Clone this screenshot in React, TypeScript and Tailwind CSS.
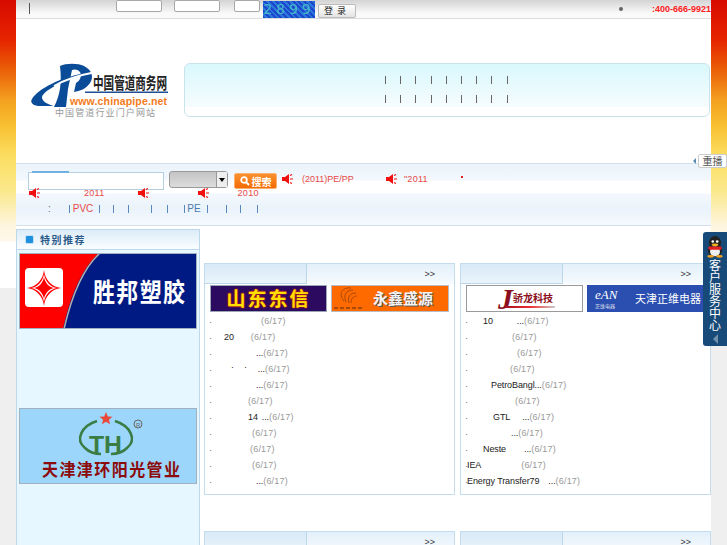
const CJK = "font-['Noto_Sans_CJK_SC',sans-serif]";

type Seg = { c?: string; t: string; d?: boolean };

function Speaker({ className = "" }: { className?: string }) {
  return (
    <svg width="11" height="10" viewBox="0 0 11 10" className={`shrink-0 ${className}`}>
      <path d="M0 3h3L7 0v10L3 7H0z" fill="#f01010" />
      <path d="M8 1.500l2-1M8 5h3M8 8.500l2 1" stroke="#f01010" strokeWidth="1.200" fill="none" />
    </svg>
  );
}

function Pipe({ c }: { c: string }) {
  return <span className={`w-px h-[8px] bg-[#5a86c0] shrink-0 ${c}`} />;
}

function BannerPipes() {
  return (
    <div className="flex gap-[14.2px]">
      {[0, 1, 2, 3, 4, 5, 6, 7, 8].map((i) => (
        <span key={i} className="w-px h-[8px] bg-[#666]" />
      ))}
    </div>
  );
}

function Logo() {
  return (
    <svg width="142" height="60" viewBox="0 0 142 60" className="block">
      <path d="M2 36C8 26 30 14 60 9l.500 1C40 15 14 26 12 34c0 4 4 7 12 9H8C2 42 0 39 2 36Z" fill="#0b4c98" />
      <path d="M30 3C36 0 48 0 54 3c8 4 10 11 6 17-4 6-10 8-16 9l2-9c4-2 6-7 4-11-2-3-6-3-8-2L38 26l-2 18H24C30 32 32 20 30 3Z" fill="#0b4c98" />
      <path d="M24 23C36 16 50 12 66 9" stroke="#fff" strokeWidth="1.800" fill="none" />
      <rect x="55" y="28.500" width="83" height="1.500" fill="#1f4f90" />
      <text transform="translate(63,26) scale(1,1.550)" fontSize="10.600" fontWeight="700" fill="#222" textLength="74" className={CJK}>中国管道商务网</text>
      <text x="40" y="42" fontSize="10.500" fontWeight="700" fill="#f47a20" textLength="97" className="font-['Liberation_Sans',sans-serif]">www.chinapipe.net</text>
      <text x="25" y="53" fontSize="9" fill="#999" textLength="100" className={CJK}>中国管道行业门户网站</text>
    </svg>
  );
}

function AdShengbang() {
  return (
    <svg width="178" height="76" viewBox="0 0 178 76" className="block">
      <rect width="178" height="76" fill="#001a84" />
      <path d="M0 0H80C60 18 50 50 44 76H0Z" fill="#ff0000" />
      <path d="M81 0C61 18 51 50 45 76" stroke="#b0b0b0" strokeWidth="1.500" fill="none" />
      <rect x="6" y="15" width="38" height="39" rx="4" fill="#fff" />
      <path d="M25 17c1 10 8 17 17 18-9 1-16 8-17 18-1-10-8-17-17-18 9-1 16-8 17-18Z" fill="#ff0000" />
      <path d="M25 21c1 7 6 13 13 14-7 1-12 7-13 14-1-7-6-13-13-14 7-1 12-7 13-14Z" fill="#fff" />
      <path d="M25 24c1 6 5 10 10 11-5 1-9 5-10 11-1-6-5-10-10-11 5-1 9-5 10-11Z" fill="#ff0000" />
      <text transform="translate(74,49) scale(1,1.200)" fontSize="22" fontWeight="700" fill="#fff" textLength="92" className={CJK}>胜邦塑胶</text>
      <rect x=".500" y=".500" width="177" height="75" fill="none" stroke="#9fb0c4" />
    </svg>
  );
}

function AdTianjin() {
  return (
    <svg width="178" height="76" viewBox="0 0 178 76" className="block">
      <rect width="178" height="76" fill="#9dd6fb" />
      <path d="M87 4l1.800 4.400 4.700.3-3.600 3 1.200 4.600-4.100-2.500-4.100 2.500 1.200-4.600-3.600-3 4.700-.3Z" fill="#e8473a" />
      <path d="M78 13C62 18 56 32 66 40c4 4 10 6 16 6" stroke="#3a7d44" strokeWidth="2.500" fill="none" />
      <path d="M96 13c16 5 22 19 12 27-4 4-10 6-16 6" stroke="#3a7d44" strokeWidth="2.500" fill="none" />
      <text x="70" y="45" fontSize="24" fontWeight="700" fill="#3a7d44" textLength="33" lengthAdjust="spacingAndGlyphs" className="font-['Liberation_Sans',sans-serif]">TH</text>
      <circle cx="119" cy="16" r="4" fill="none" stroke="#666" />
      <text x="117" y="18.500" fontSize="6" fill="#666">R</text>
      <text transform="translate(23,68) scale(1,1.100)" fontSize="16" fontWeight="700" fill="#8c0c0c" textLength="138" className={CJK}>天津津环阳光管业</text>
      <rect x=".500" y=".500" width="177" height="75" fill="none" stroke="#a0b0bc" />
    </svg>
  );
}

function AdShandong() {
  return (
    <div className={`w-[117px] h-[27px] bg-[#2c0a60] border border-[#9aa7b5] flex items-center justify-center text-[#ffe000] text-[19px] font-bold tracking-[2px] [text-shadow:0_0_2px_#f02000,0_0_1px_#f02000] ${CJK}`}>
      山东东信
    </div>
  );
}

function AdYongxin() {
  return (
    <div className={`w-[118px] h-[27px] bg-[#ff6a00] border border-[#b9bec4] flex items-center ${CJK}`}>
      <svg width="38" height="25" viewBox="0 0 38 25" className="shrink-0">
        <path d="M12 15C6 8 10 1 19 2M14 16C11 9 14 4 21 4M17 17C15 11 18 7 24 7M19 17C19 13 21 10 25 10" stroke="#a8480a" strokeWidth="1" fill="none" />
        <path d="M2 22h28" stroke="#a8480a" strokeWidth="2" strokeDasharray="4 2" />
      </svg>
      <span className="ml-[3px] text-[#f4f4f4] text-[15px] font-bold [text-shadow:1px_1px_0_#555] whitespace-nowrap">永鑫盛源</span>
    </div>
  );
}

function AdJiaolong() {
  return (
    <div className={`relative w-[117px] h-[27px] bg-white border border-[#9a9a9a] flex items-center pl-[31px] ${CJK}`}>
      <span className="text-[#8a1020] text-[30px] leading-[25px] italic font-bold font-['Liberation_Serif',serif] w-[15px]">J</span>
      <span className="text-[#8a1020] text-[10px] font-bold -mt-[3px] whitespace-nowrap">骄龙科技</span>
      <span className="absolute left-[38px] top-[20px] w-[50px] h-[2px] bg-[linear-gradient(90deg,#a01020,#f03030,#ccc)]" />
    </div>
  );
}

function AdZhengwei() {
  return (
    <div className={`w-[120px] h-[27px] bg-[#2b4fb0] flex items-center pl-[8px] text-white ${CJK}`}>
      <span className="w-[40px] flex flex-col leading-none gap-[2px]">
        <span className="text-[13px] italic font-['Liberation_Serif',serif] leading-[12px]">eAN</span>
        <span className="text-[5px] leading-[6px] opacity-80">正维电器</span>
      </span>
      <span className="text-[11px] whitespace-nowrap">天津正维电器</span>
    </div>
  );
}

const raised = "-translate-y-[2px]";

const leftRows: Seg[][] = [
  [{ c: "ml-[50px]", t: "(6/17)", d: true }],
  [{ c: "ml-[13px]", t: "20" }, { c: "ml-[17px]", t: "(6/17)", d: true }],
  [{ c: "ml-[45px]", t: "..." }, { t: "(6/17)", d: true }],
  [{ c: `ml-[20px] ${raised}`, t: "·" }, { c: `ml-[10px] ${raised}`, t: "·" }, { c: "ml-[11px]", t: "..." }, { t: "(6/17)", d: true }],
  [{ c: "ml-[45px]", t: "..." }, { t: "(6/17)", d: true }],
  [{ c: "ml-[37px]", t: "(6/17)", d: true }],
  [{ c: "ml-[37px]", t: "14" }, { c: "ml-[4px]", t: "..." }, { t: "(6/17)", d: true }],
  [{ c: "ml-[41px]", t: "(6/17)", d: true }],
  [{ c: "ml-[39px]", t: "(6/17)", d: true }],
  [{ c: "ml-[41px]", t: "(6/17)", d: true }],
  [{ c: "ml-[45px]", t: "..." }, { t: "(6/17)", d: true }],
];

const rightRows: Seg[][] = [
  [{ c: "ml-[16px]", t: "10" }, { c: "ml-[24px]", t: "..." }, { t: "(6/17)", d: true }],
  [{ c: "ml-[45px]", t: "(6/17)", d: true }],
  [{ c: "ml-[50px]", t: "(6/17)", d: true }],
  [{ c: "ml-[43px]", t: "(6/17)", d: true }],
  [{ c: "ml-[24px]", t: "PetroBangl..." }, { t: "(6/17)", d: true }],
  [{ c: "ml-[48px]", t: "(6/17)", d: true }],
  [{ c: "ml-[26px]", t: "GTL" }, { c: "ml-[12px]", t: "..." }, { t: "(6/17)", d: true }],
  [{ c: "ml-[44px]", t: "..." }, { t: "(6/17)", d: true }],
  [{ c: "ml-[16px]", t: "Neste" }, { c: "ml-[18px]", t: "..." }, { t: "(6/17)", d: true }],
  [{ t: "IEA" }, { c: "ml-[40px]", t: "(6/17)", d: true }],
  [{ t: "Energy Transfer79" }, { c: "ml-[9px]", t: "..." }, { t: "(6/17)", d: true }],
];

function Rows({ rows }: { rows: Seg[][] }) {
  return (
    <div className="pl-[4px] pt-[2px]">
      {rows.map((r, i) => (
        <div key={i} className="h-[16px] flex items-center text-[9px] text-[#333] whitespace-nowrap">
          <span className="w-[2px] text-[#666] leading-none">·</span>
          {r.map((s, j) => (
            <span key={j} className={`${s.c ?? ""} ${s.d ? "text-[#999] tracking-[0.2px]" : "text-[#222] tracking-[-0.1px]"}`}>
              {s.t}
            </span>
          ))}
        </div>
      ))}
    </div>
  );
}

function PanelHead() {
  return (
    <div className="h-[20px] flex bg-[linear-gradient(#e3f0fa,#f6fbff)]">
      <div className="w-[102px] h-[20px] bg-[linear-gradient(#d8e9f7,#eaf4fc)] border-r border-b border-[#bdd7ea]" />
      <div className="flex-1 flex justify-end items-center pr-[19px] pt-[2px] text-[9px] text-[#333]">&gt;&gt;</div>
    </div>
  );
}

function Panel({ left, right, rows }: { left: React.ReactNode; right: React.ReactNode; rows: Seg[][] }) {
  return (
    <div className="w-[251px] h-[232px] border border-[#c3dcee] bg-white overflow-hidden">
      <PanelHead />
      <div className="flex gap-[4px] pl-[5px] pt-[1px]">
        {left}
        {right}
      </div>
      <Rows rows={rows} />
    </div>
  );
}

export default function App() {
  return (
    <div className="relative w-[727px] h-[545px] overflow-hidden flex font-['Liberation_Sans',sans-serif] bg-[#efefef]">
      <div className="w-[16px] h-[288px] shrink-0 bg-[linear-gradient(#d80a00_0px,#e52500_40px,#ea6008_70px,#f4a020_100px,#f8c030_125px,#fbdd60_155px,#fbe88a_190px,#fdf5dc_225px,#fff8ea_241px,#fff_242px)]" />

      <div className="w-[695px] h-[545px] shrink-0 bg-white">
        {/* top bar */}
        <div className="h-[19px] border-b border-[#dcdcdc] bg-[linear-gradient(#d4d4d4,#fafafa_75%)] flex items-start relative">
          <span className="ml-[13px] mt-[3px] w-px h-[11px] bg-[#555]" />
          <span className="ml-[86px] w-[46px] h-[12px] bg-white border border-[#a8a8a8] rounded-[2px]" />
          <span className="ml-[12px] w-[46px] h-[12px] bg-white border border-[#a8a8a8] rounded-[2px]" />
          <span className="ml-[14px] w-[26px] h-[12px] bg-white border border-[#a8a8a8] rounded-[2px]" />
          <span className="ml-[3px] mt-[1px] w-[52px] h-[17px] bg-[repeating-linear-gradient(45deg,#1c48d0_0px,#1c48d0_2px,#2a78d8_2px,#2a78d8_4px)] text-[#48b8c8] text-[14px] leading-[17px] text-center tracking-[4px] font-['DejaVu_Sans',sans-serif] overflow-hidden">
            2899
          </span>
          <span className={`ml-[3px] mt-[4px] w-[38px] h-[14px] bg-[linear-gradient(#fff,#e4e4e4)] border border-[#bbb] rounded-[2px] text-[9px] leading-[12px] text-center text-[#222] tracking-[4px] ${CJK}`}>
            登录
          </span>
          <span className="ml-[263px] mt-[7px] w-[4px] h-[4px] rounded-full bg-[#666]" />
          <span className="ml-[29px] mt-[3px] text-[9px] font-bold text-[#ff2020] whitespace-nowrap leading-[12px]">:400-666-9921</span>
        </div>

        {/* logo + banner */}
        <div className="h-[144px] flex items-start pt-[44px]">
          <div className="ml-[14px] w-[154px]">
            <Logo />
          </div>
          <div className="w-[526px] h-[54px] rounded-[6px] border border-[#c8e4ea] bg-[linear-gradient(#d9f8fd,#f6fcfe_82%,#fff_83%)] flex flex-col pt-[12px] gap-[11px] pl-[200px]">
            <BannerPipes />
            <BannerPipes />
          </div>
        </div>

        {/* search panel */}
        <div className="h-[63px] border-t border-b border-[#d6e0ec] bg-[linear-gradient(#ebf3fb_0,#f2f8fd_16px,#fff_17px,#fff_29px,#f3f8fd_30px,#eaf3fb_45px,#f4f9fd_60px)] pl-[12px] pt-[8px] relative">
          <div className="flex items-start h-[27px]">
            <div className="relative w-[136px] h-[18px] bg-white border border-[#b4cfe2]">
              <span className="absolute left-[3px] -top-[2px] w-[37px] h-[2px] bg-[#6fb1e0]" />
            </div>
            <div className="ml-[5px] -mt-[1px] w-[59px] h-[17px] rounded-[3px] border border-[#999] bg-[linear-gradient(#c4c4c4,#dcdcdc)] flex justify-end">
              <span className="w-[11px] h-full border-l border-[#999] bg-[#eee] flex items-center justify-center">
                <span className="border-x-[3px] border-x-transparent border-t-[4px] border-t-black" />
              </span>
            </div>
            <div className={`ml-[6px] mt-[1px] w-[43px] h-[16px] rounded-[2px] bg-[linear-gradient(#f89030,#f56c00)] border border-[#fbb070] flex items-center justify-center gap-[2px] text-white text-[10px] font-bold ${CJK}`}>
              <svg width="10" height="10" viewBox="0 0 10 10">
                <circle cx="4" cy="4" r="2.800" fill="none" stroke="#fff" strokeWidth="1.800" />
                <path d="M6 6l3 3" stroke="#fff" strokeWidth="2" />
              </svg>
              搜索
            </div>
            <Speaker className="ml-[5px] mt-[2px]" />
            <span className="ml-[9px] mt-[1px] text-[9px] text-[#e84848] leading-[12px]">(2011)PE/PP</span>
            <Speaker className="ml-[32px] mt-[2px]" />
            <span className="ml-[7px] mt-[1px] text-[9px] text-[#e84848] leading-[12px] tracking-[0.3px]">"2011</span>
            <span className="ml-[33px] mt-[4px] w-[2px] h-[2px] bg-[#e02020]" />
          </div>
          <div className="absolute left-[13px] top-[23px] flex items-center text-[9px] text-[#e84848] leading-[12px] tracking-[0.3px]">
            <Speaker />
            <span className="ml-[44px]">2011</span>
            <Speaker className="ml-[33px]" />
            <Speaker className="ml-[49px]" />
            <span className="ml-[29px]">2010</span>
          </div>
          <div className="absolute left-0 top-[39px] h-[12px] flex items-center text-[10px] leading-[12px]">
            <span className="ml-[32px] text-[#666]">:</span>
            <Pipe c="ml-[18px]" />
            <span className="ml-[3px] text-[#e84848]">PVC</span>
            <Pipe c="ml-[6px]" />
            <Pipe c="ml-[13px]" />
            <Pipe c="ml-[14px]" />
            <Pipe c="ml-[22px]" />
            <Pipe c="ml-[15px]" />
            <Pipe c="ml-[16px]" />
            <span className="ml-[2px] text-[#4a7ab0]">PE</span>
            <Pipe c="ml-[6px]" />
            <Pipe c="ml-[18px]" />
            <Pipe c="ml-[13px]" />
            <Pipe c="ml-[16px]" />
          </div>
        </div>

        {/* columns */}
        <div className="flex pt-[3px]">
          <div className="w-[184px] h-[330px] shrink-0 border-x border-t border-[#bcd8ea] bg-[#e6f7ff]">
            <div className="h-[20px] bg-[linear-gradient(#dcecf8,#fafdff)] border-b border-[#bcd8ea] flex items-center pl-[8px]">
              <span className="w-[9px] h-[9px] rounded-[2px] bg-[#1e90e0] border border-[#bfe0f5]" />
              <span className={`ml-[6px] text-[10px] font-bold text-[#2a5a88] tracking-[1.500px] ${CJK}`}>特别推荐</span>
            </div>
            <div className="pl-[2px] pt-[3px] flex flex-col gap-[79px]">
              <AdShengbang />
              <AdTianjin />
            </div>
          </div>
          <div className="pt-[34px] pl-[4px]">
            <div className="flex gap-[5px]">
              <Panel left={<AdShandong />} right={<AdYongxin />} rows={leftRows} />
              <Panel left={<AdJiaolong />} right={<AdZhengwei />} rows={rightRows} />
            </div>
            <div className="flex gap-[5px] mt-[36px]">
              <div className="w-[251px] border border-[#c3dcee]"><PanelHead /></div>
              <div className="w-[251px] border border-[#c3dcee]"><PanelHead /></div>
            </div>
          </div>
        </div>
      </div>

      <div className="w-[16px] h-[288px] shrink-0 bg-[linear-gradient(#d80a00_0px,#e52500_40px,#ea6008_70px,#f4a020_100px,#f8c030_125px,#fbdd60_155px,#fbe88a_190px,#fdf5dc_225px,#fff8ea_241px,#fff_242px)]" />

      {/* replay tab */}
      <div className="absolute left-[693px] top-[154px] flex items-center">
        <span className="border-y-[3px] border-y-transparent border-r-[3px] border-r-[#5a8ab0]" />
        <span className={`ml-[2px] w-[29px] h-[14px] bg-white border border-[#ccc] rounded-[2px] text-[10px] leading-[12px] text-center text-[#555] overflow-hidden ${CJK}`}>重播</span>
      </div>

      {/* service widget */}
      <div className="absolute left-[703px] top-[232px] w-[24px] h-[114px] bg-[#174a78] rounded-l-[3px] flex flex-col items-center pt-[4px]">
        <svg width="20" height="22" viewBox="0 0 18 20">
          <ellipse cx="9" cy="6" rx="5.500" ry="6" fill="#222" />
          <ellipse cx="9" cy="13" rx="6.500" ry="6" fill="#222" />
          <ellipse cx="9" cy="14" rx="4.500" ry="4.500" fill="#eee" />
          <rect x="3" y="9.500" width="12" height="3" rx="1" fill="#e02020" />
          <ellipse cx="9" cy="8" rx="3" ry="1.200" fill="#f0b020" />
          <circle cx="7" cy="5" r="1.200" fill="#fff" />
          <circle cx="11" cy="5" r="1.200" fill="#fff" />
          <ellipse cx="5" cy="18.500" rx="3" ry="1.200" fill="#f0a020" />
          <ellipse cx="13" cy="18.500" rx="3" ry="1.200" fill="#f0a020" />
        </svg>
        <div className={`mt-[1px] text-white text-[12px] leading-[12px] w-[12px] text-center ${CJK}`}>客户服务中心</div>
        <span className="mt-[3px] border-y-[5px] border-y-transparent border-r-[5px] border-r-[#6f8fab]" />
      </div>
    </div>
  );
}
